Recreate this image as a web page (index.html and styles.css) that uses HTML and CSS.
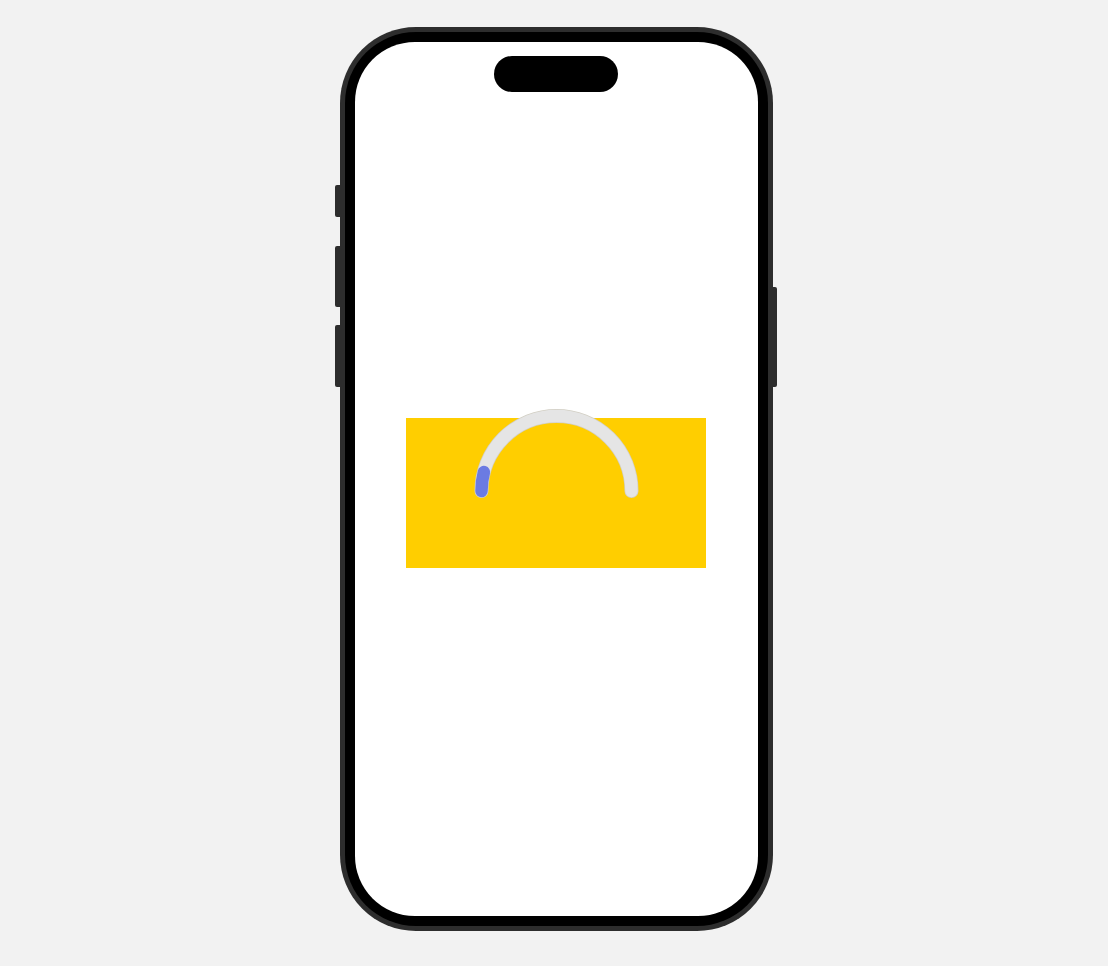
FILE: index.html
```html
<!DOCTYPE html>
<html lang="en">
<head>
<meta charset="utf-8">
<title>Gauge preview</title>
<link rel="stylesheet" href="styles.css">
</head>
<body>
  <div class="stage">
    <div class="phone">
      <span class="btn btn-action"></span>
      <span class="btn btn-vol-up"></span>
      <span class="btn btn-vol-down"></span>
      <span class="btn btn-power"></span>
      <div class="bezel">
        <div class="screen">
          <div class="island"></div>
          <div class="card">
            <svg class="gauge" width="300" height="150" viewBox="0 0 300 150">
              <path class="track-edge" d="M 75.5 73 A 75 75 0 0 1 225.5 73"/>
              <path class="track" d="M 75.5 73 A 75 75 0 0 1 225.5 73"/>
              <path class="value" d="M 75.5 73 A 75 75 0 0 1 77.9 54.1"/>
            </svg>
          </div>
        </div>
      </div>
    </div>
  </div>
</body>
</html>
```

FILE: styles.css
```css
html, body {
  margin: 0;
  padding: 0;
  background: #f2f2f2;
}

.stage {
  display: flex;
  justify-content: center;
  padding: 27px 0 0 4px;
}

/* device body: dark rim with black bezel inside */
.phone {
  position: relative;
  width: 433px;
  height: 904px;
  box-sizing: border-box;
  padding: 5px;
  border-radius: 76px;
  background: #2d2d2d;
}

.bezel {
  height: 100%;
  box-sizing: border-box;
  padding: 10px;
  border-radius: 71px;
  background: #000;
}

.screen {
  position: relative;
  height: 100%;
  box-sizing: border-box;
  padding-top: 28px;
  border-radius: 60px;
  background: #fff;
  display: flex;
  align-items: center;
  justify-content: center;
}

.island {
  position: absolute;
  top: 14px;
  left: 50%;
  margin-left: -62px;
  width: 124px;
  height: 36px;
  border-radius: 18px;
  background: #000;
}

/* hardware buttons on the frame edges */
.btn {
  position: absolute;
  width: 5px;
  background: #2d2d2d;
}

.btn-action {
  left: -5px;
  top: 158px;
  height: 32px;
  border-radius: 2px 0 0 2px;
}

.btn-vol-up {
  left: -5px;
  top: 219px;
  height: 61px;
  border-radius: 2px 0 0 2px;
}

.btn-vol-down {
  left: -5px;
  top: 298px;
  height: 62px;
  border-radius: 2px 0 0 2px;
}

.btn-power {
  right: -4px;
  width: 4px;
  top: 260px;
  height: 100px;
  border-radius: 0 2px 2px 0;
}

.card {
  width: 300px;
  height: 150px;
  background: #ffce00;
}

.gauge {
  display: block;
  overflow: visible;
}

.gauge path {
  fill: none;
  stroke-linecap: round;
}

.track-edge {
  stroke: #d2cfc4;
  stroke-width: 14;
}

.track {
  stroke: #e5e5e5;
  stroke-width: 12.5;
}

.value {
  stroke: #6b7be2;
  stroke-width: 12.5;
}
```
